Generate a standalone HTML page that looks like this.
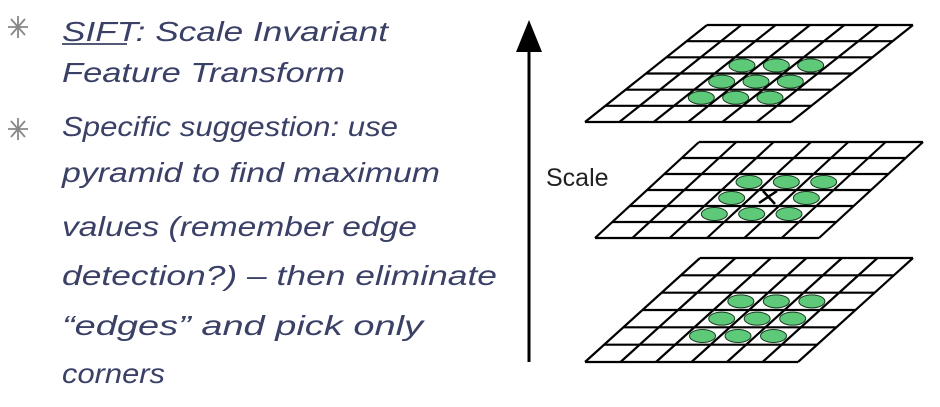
<!DOCTYPE html>
<html><head><meta charset="utf-8"><style>
html,body{margin:0;padding:0;background:#fff;width:940px;height:407px;overflow:hidden}
svg{display:block}
.h{font-family:"Liberation Sans",sans-serif;font-style:italic;font-size:28px;fill:#3a4066}
</style></head><body>
<svg id="s" width="940" height="407" xmlns="http://www.w3.org/2000/svg">
<g stroke="#888" stroke-width="1.8">
<path d="M18 16 V38 M8 27 H28 M11 19 L25 35 M25 19 L11 35"/>
<path d="M18 118 V140 M8 129 H28 M11 121 L25 137 M25 121 L11 137"/>
</g>
<g class="h">
<text x="62" y="41" textLength="326" lengthAdjust="spacingAndGlyphs">SIFT: Scale Invariant</text>
<text x="62" y="82" textLength="283" lengthAdjust="spacingAndGlyphs">Feature Transform</text>
<text x="62" y="136" textLength="336" lengthAdjust="spacingAndGlyphs">Specific suggestion: use</text>
<text x="62" y="182" textLength="378" lengthAdjust="spacingAndGlyphs">pyramid to find maximum</text>
<text x="62" y="236" textLength="355" lengthAdjust="spacingAndGlyphs">values (remember edge</text>
<text x="62" y="285" textLength="435" lengthAdjust="spacingAndGlyphs">detection?)  – then eliminate</text>
<text x="62" y="335" textLength="361" lengthAdjust="spacingAndGlyphs">“edges”  and pick only</text>
<text x="62" y="383" textLength="103" lengthAdjust="spacingAndGlyphs">corners</text>
</g>
<line x1="62" y1="44" x2="127" y2="44" stroke="#1c2347" stroke-width="1.5"/>
<line x1="529" y1="40" x2="529" y2="362" stroke="#000" stroke-width="3"/>
<polygon points="529,20 516,52 542,52" fill="#000"/>
<text x="546" y="186" font-family="Liberation Sans,sans-serif" font-size="25" fill="#222">Scale</text>
<g id="grids"></g>
</svg>
<script>
var g=document.getElementById('grids'),out='';
function grid(tl,tr,top,bl,bot,skip){
 var sh=tl-bl,w=tr-tl,h=bot-top;
 function P(u,v){return [tl+u*w/6-v*sh/6, top+v*h/6];}
 for(var r=2;r<=4;r++)for(var c=2;c<=4;c++){
  if(skip&&r==3&&c==3)continue;
  var p=P(c+0.5,r+0.5);
  out+='<ellipse cx="'+p[0]+'" cy="'+p[1]+'" rx="13" ry="6.5" fill="#5fc97a" stroke="#1a3a20" stroke-width="1"/>';
 }
 for(var i=0;i<=6;i++){
  var a=P(0,i),b=P(6,i);out+='<line x1="'+a[0]+'" y1="'+a[1]+'" x2="'+b[0]+'" y2="'+b[1]+'" stroke="#000" stroke-width="2.2"/>';
  a=P(i,0);b=P(i,6);out+='<line x1="'+a[0]+'" y1="'+a[1]+'" x2="'+b[0]+'" y2="'+b[1]+'" stroke="#000" stroke-width="2.2"/>';
 }
 if(skip){var p=P(3.5,3.5);out+='<path d="M'+(p[0]-10)+' '+(p[1]+5)+' L'+(p[0]+8)+' '+(p[1]-7)+' M'+(p[0]-6)+' '+(p[1]-7)+' L'+(p[0]+6)+' '+(p[1]+6)+'" stroke="#000" stroke-width="2.5"/>';}
}
grid(707,913,25,585,122,false);
grid(699,923,142,595,238,true);
grid(700,913,258,585,362,false);
g.innerHTML=out;
</script>
</body></html>
